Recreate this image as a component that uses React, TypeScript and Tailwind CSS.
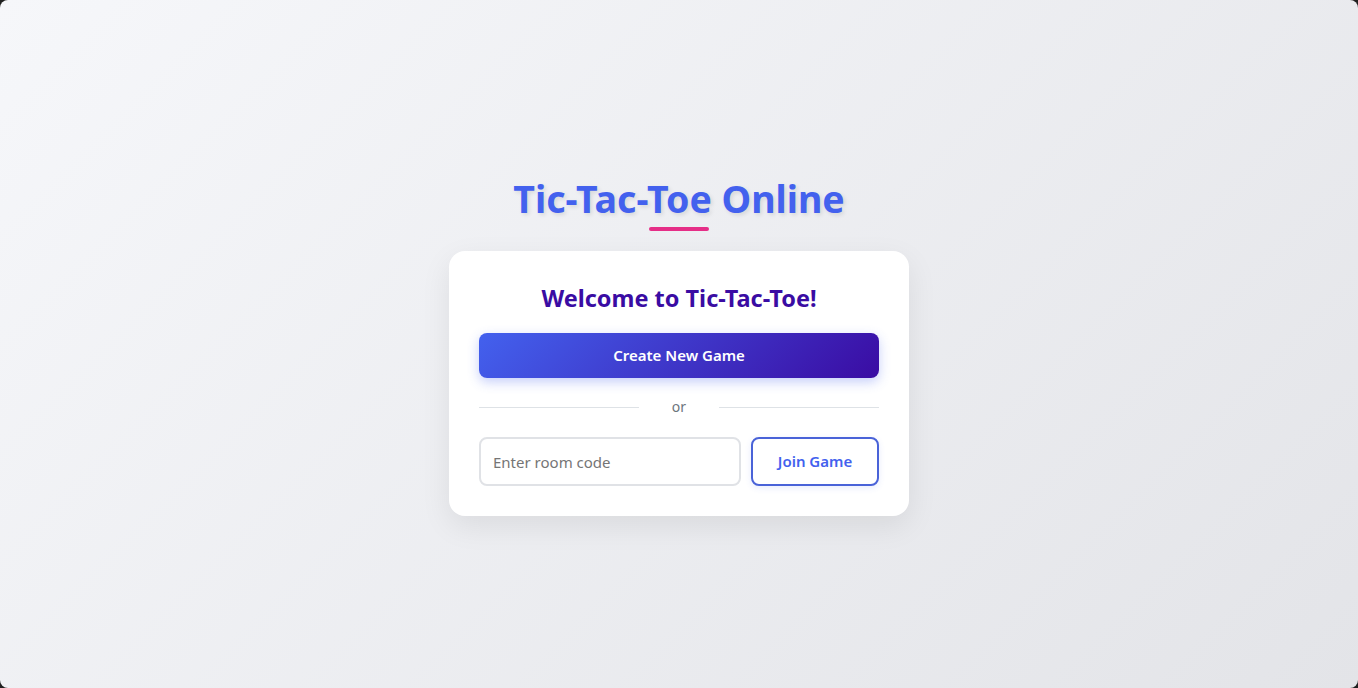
export default function App() {
  return (
    <div className="h-[688px] w-[1358px] bg-[#202020]">
      <div
        className="flex h-full w-full flex-col items-center justify-center overflow-hidden rounded-[8px] bg-[linear-gradient(135deg,#f6f7fa_0%,#e3e4e8_100%)] pt-[3px]"
        style={{ fontFamily: '"Noto Sans", "Open Sans", sans-serif' }}
      >
        {/* Titel */}
        <h1 className="text-[37.5px] leading-[48px] font-bold text-[#4361ee] [text-shadow:2px_2px_4px_rgba(0,0,0,0.1)]">
          Tic-Tac-Toe Online
        </h1>
        <div className="mt-[4px] h-[4px] w-[60px] rounded-full bg-[#e52e87]" />

        {/* Karte */}
        <div className="mt-[20px] w-[460px] rounded-[16px] bg-white px-[30px] pt-[30px] pb-[30px] shadow-[0_10px_30px_rgba(0,0,0,0.08)]">
          <h2 className="text-center text-[23.5px] leading-[34px] font-bold text-[#3a0ca3]">
            Welcome to Tic-Tac-Toe!
          </h2>
          <button className="mt-[18px] flex h-[45px] w-full items-center justify-center rounded-[8px] bg-[linear-gradient(135deg,#4361ee,#3a0ca3)] text-[15px] font-semibold text-white shadow-[0_4px_12px_rgba(67,97,238,0.3)]">
            Create New Game
          </button>

          <div className="mt-[19px] flex items-center">
            <div className="h-px flex-1 bg-[#dee2e6]" />
            <span className="w-[80px] text-center text-[14px] leading-[20px] text-[#6c757d]">or</span>
            <div className="h-px flex-1 bg-[#dee2e6]" />
          </div>

          <div className="mt-[20px] flex gap-[10px]">
            <input
              placeholder="Enter room code"
              className="h-[49px] min-w-0 flex-1 rounded-[8px] border-2 border-[#e0e2e6] px-[12px] text-[15px] text-[#333] outline-none placeholder:text-[#757575]"
            />
            <button className="h-[49px] w-[128px] rounded-[8px] border-2 border-[#4a63d8] bg-white text-[15px] font-semibold text-[#4361ee] shadow-[0_2px_6px_rgba(67,97,238,0.12)]">
              Join Game
            </button>
          </div>
        </div>
      </div>
    </div>
  )
}
